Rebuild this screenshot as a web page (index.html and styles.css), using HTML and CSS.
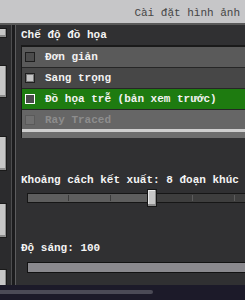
FILE: index.html
```html
<!DOCTYPE html>
<html lang="vi">
<head>
<meta charset="utf-8">
<title>Cài đặt hình ảnh</title>
<link rel="stylesheet" href="styles.css">
</head>
<body>
<div class="screen">
  <header class="topbar"><span class="title">Cài đặt hình ảnh</span></header>
  <div class="main">
    <nav class="side">
      <div class="sbtn b1"></div>
      <div class="sbtn b2"></div>
      <div class="sbtn b3"></div>
      <div class="sbtn b4"></div>
      <div class="sbtn b5"></div>
    </nav>
    <div class="divider"></div>
    <section class="panel">
      <div class="label">Chế độ đồ họa</div>
      <div class="list">
        <div class="row r-simple"><span class="box"></span><span class="txt">Đơn giản</span></div>
        <div class="row r-fancy"><span class="box checked"></span><span class="txt">Sang trọng</span></div>
        <div class="row r-active"><span class="box focus"></span><span class="txt">Đồ họa trễ (bản xem trước)</span></div>
        <div class="row r-disabled"><span class="box dim"></span><span class="txt">Ray Traced</span></div>
        <div class="list-foot"></div>
      </div>
      <div class="label slider-label">Khoảng cách kết xuất: 8 đoạn khúc ©</div>
      <div class="track">
        <div class="thumb" style="left:119px"></div>
      </div>
      <div class="label bright-label">Độ sáng: 100</div>
      <div class="bar"></div>
    </section>
  </div>
  <div class="footer"><div class="scroll"></div></div>
</div>
</body>
</html>
```
FILE: styles.css
```css
* { box-sizing: border-box; }
html, body { margin: 0; padding: 0; }
body {
  width: 245px;
  height: 300px;
  overflow: hidden;
  background: #1c1a29;
  font-family: "Liberation Mono", "DejaVu Sans", monospace;
  font-size: 11px;
  font-weight: bold;
  line-height: 12px;
  color: #f2f2f2;
}
.screen { width: 245px; height: 300px; display: flex; flex-direction: column; }

.topbar {
  height: 25px;
  flex: none;
  background: #c6c6c8;
  border-bottom: 2px solid #595959;
  padding: 7px 5px 0 0;
  text-align: right;
}
.title { color: #454545; white-space: nowrap; font-weight: normal; }

.main { height: 260px; flex: none; display: flex; }

.side {
  width: 11px;
  flex: none;
  background: #2b2b2d;
  display: flex;
  flex-direction: column;
  padding-top: 3px;
  overflow: hidden;
}
.sbtn {
  width: 7px;
  flex: none;
  background: #c6c6c6;
  border: 1px solid #1a1a1a;
  border-left: none;
  box-shadow: inset -1px -2px 0 #8b8b8b;
}
.b1 { height: 10px; }
.b2 { height: 33px; margin-top: 27px; }
.b3 { height: 35px; margin-top: 38px; }
.b4 { height: 35px; margin-top: 32px; }
.b5 { height: 22px; margin-top: 31px; }

.divider {
  width: 5px;
  flex: none;
  background: #1c1c1e;
  border-left: 1px solid #4d4d4f;
  border-right: 1px solid #5c5c5e;
}

.panel {
  flex: 1;
  min-width: 0;
  background: #303032;
  padding: 4px 0 0 5px;
  overflow: hidden;
  display: flex;
  flex-direction: column;
}
.label { height: 12px; white-space: nowrap; color: #f4f4f4; }

.list {
  margin-top: 4px;
  margin-right: -10px;
  border: 2px solid #1a1a1a;
  border-right: none;
  border-bottom: none;
  border-left-width: 1px;
}
.row {
  height: 21px;
  display: flex;
  align-items: center;
  gap: 10px;
  padding-left: 3px;
  border-top: 1px solid #262626;
  white-space: nowrap;
}
.row:first-child { border-top: none; height: 20px; }
.r-simple { background: #5a5a5a; }
.r-fancy { background: #474747; }
.r-active { background: #1e7b10; }
.r-disabled { background: #666666; color: #8d8d8d; height: 20px; }

.box {
  width: 10px;
  height: 10px;
  flex: none;
  border: 1px solid #1e1e1e;
  background: #4c4c4c;
}
.box.checked {
  background: #c4c4c4;
  box-shadow: inset 0 0 0 1px #7a7a7a;
}
.box.focus { border-color: #ffffff; background: #4a4a4a; }
.box.dim { border-color: #5a5a5a; background: #707070; }

.list-foot {
  height: 9px;
  background: #6e6e6e;
  border-top: 3px solid #cfcfcf;
}

.slider-label { margin-top: 36px; }

.track {
  position: relative;
  margin: 7px -10px 0 6px;
  height: 10px;
  border: 1px solid #161616;
  background:
    linear-gradient(#3b3b3b, #3b3b3b) 40px 1px / 1px 6px no-repeat,
    linear-gradient(#3b3b3b, #3b3b3b) 82px 1px / 1px 6px no-repeat,
    linear-gradient(#5c5c5c, #5c5c5c) 164px 1px / 1px 6px no-repeat,
    linear-gradient(#5c5c5c, #5c5c5c) 206px 1px / 1px 6px no-repeat,
    linear-gradient(to right, #5e5e5e 0 120px, #3e3e3e 120px);
}
.thumb {
  position: absolute;
  top: -5px;
  width: 10px;
  height: 18px;
  background: #c6c6c6;
  border: 1px solid #161616;
  box-shadow: inset -1px -2px 0 #8b8b8b, inset 1px 1px 0 #ececec;
}

.bright-label { margin-top: 39px; }

.bar {
  margin: 8px -10px 0 6px;
  height: 11px;
  background: #8a898e;
  border: 1px solid #121212;
}

.footer {
  flex: 1;
  background: #1c1a29;
  padding-top: 5px;
}
.scroll {
  width: 153px;
  height: 4px;
  background: #4b4a56;
  border-radius: 0 2px 2px 0;
}
```
